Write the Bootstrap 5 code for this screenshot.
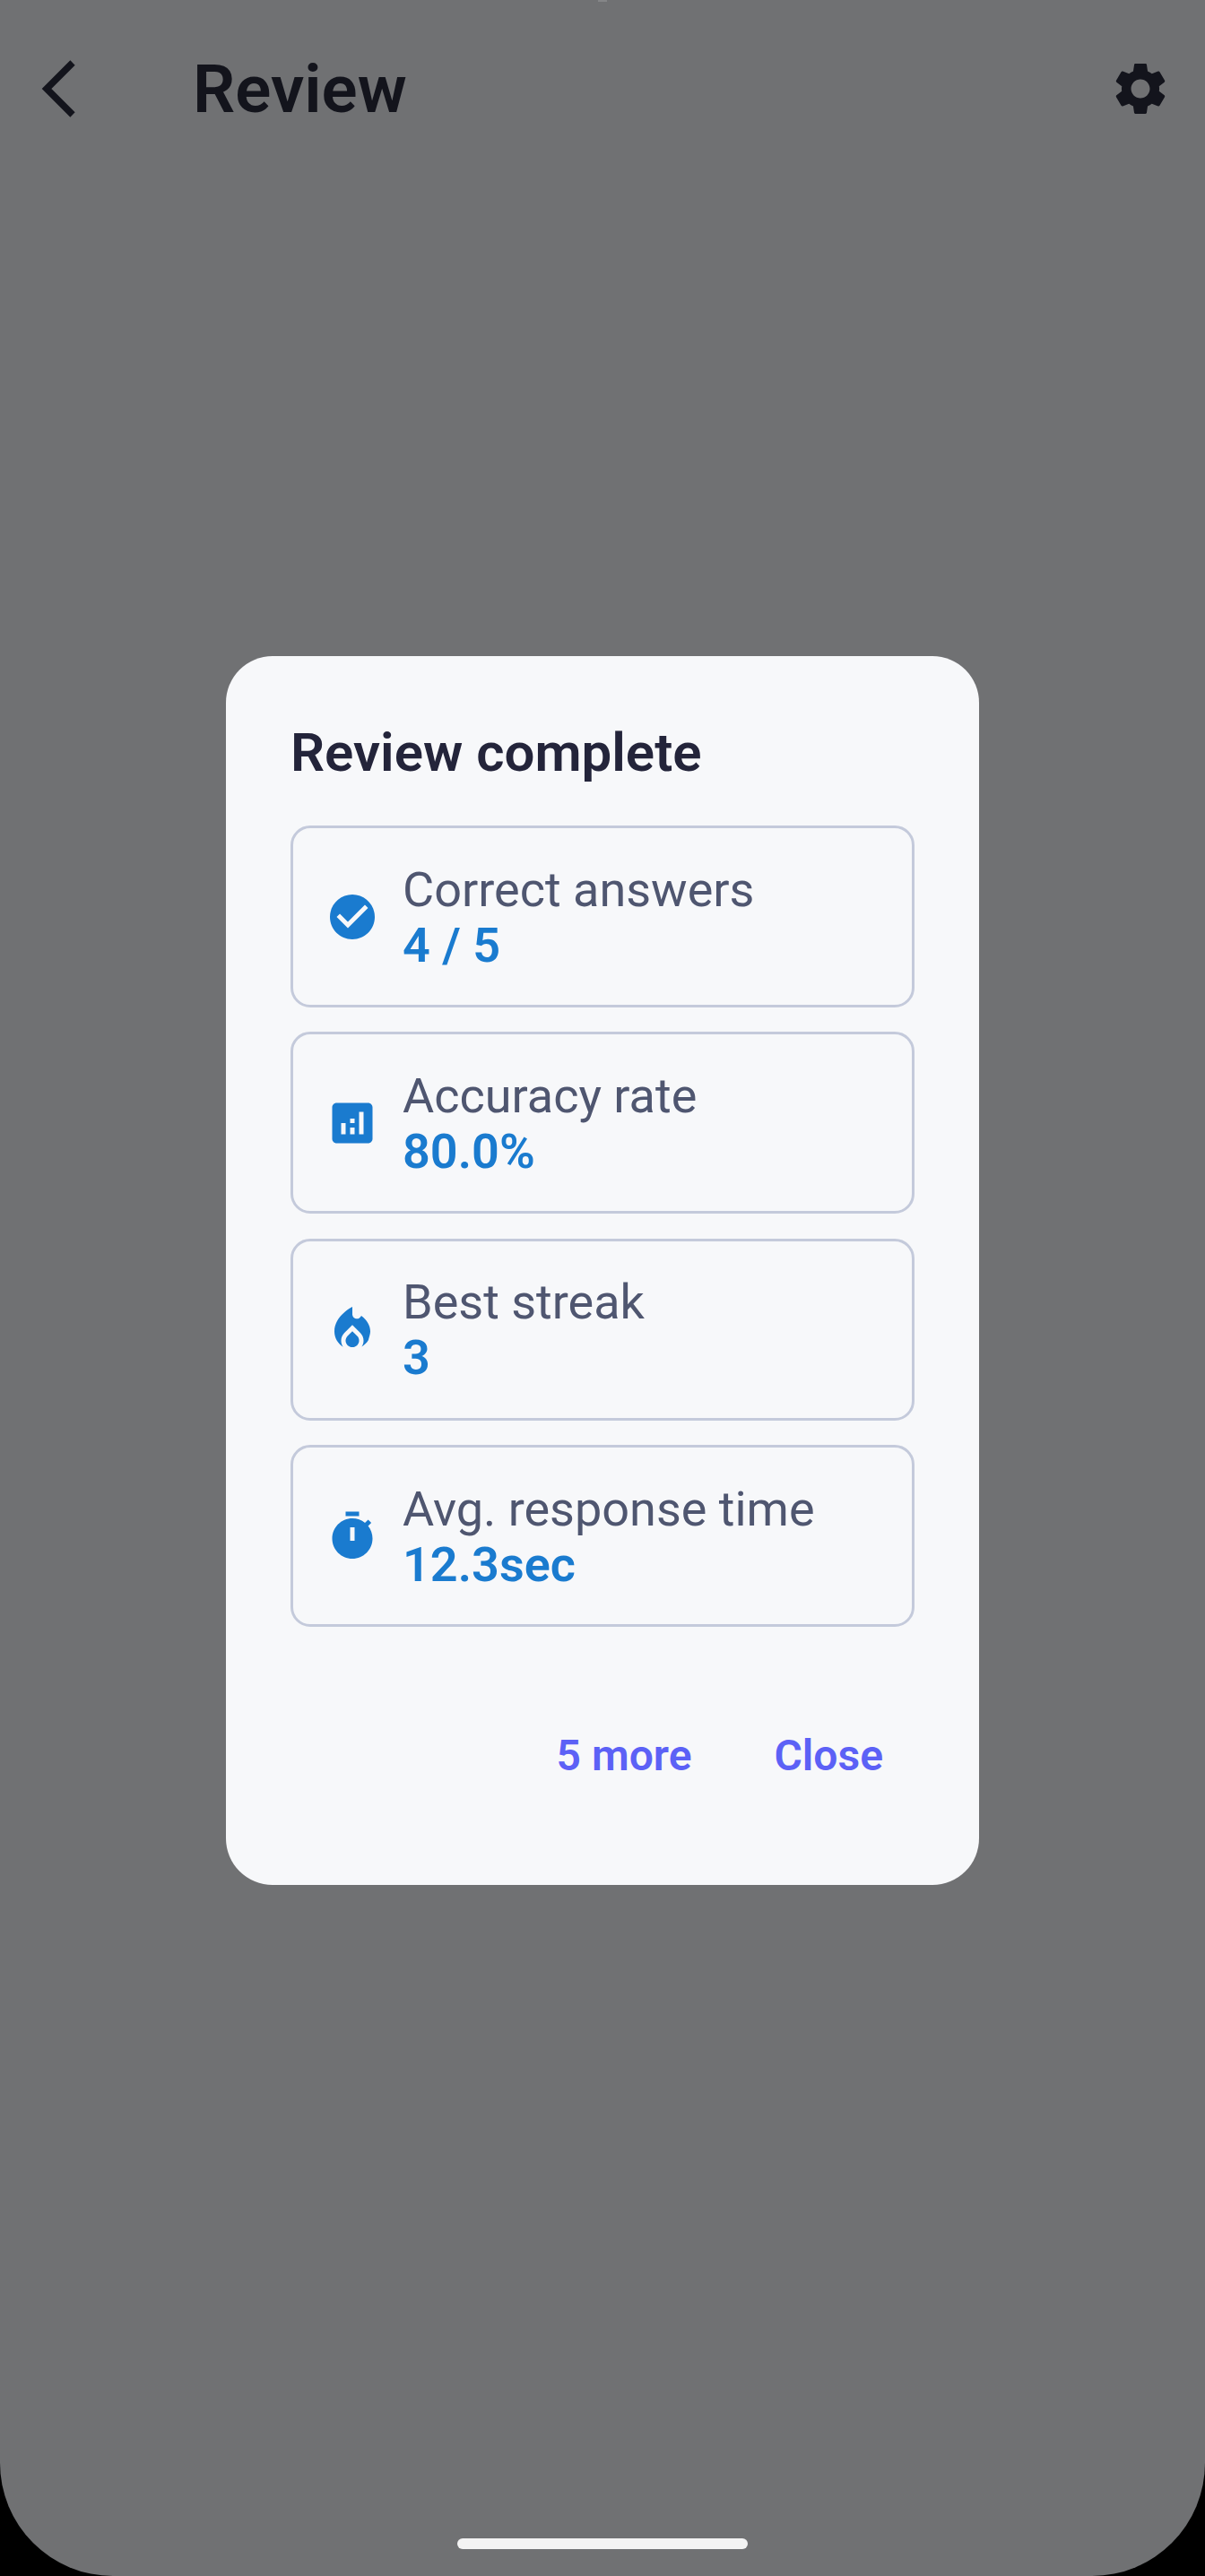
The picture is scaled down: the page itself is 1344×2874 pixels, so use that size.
<!DOCTYPE html>
<html>
<head>
    <title>Review</title>
    <link href="https://cdn.jsdelivr.net/npm/bootstrap@5.3.3/dist/css/bootstrap.min.css" rel="stylesheet">
    <style>
        body { background: #000; font-family: Roboto, "Liberation Sans", sans-serif; }
        .screen { width: 1344px; height: 2874px; background: #707173; border-radius: 0 0 126px 126px; }
        .camera-dot { top: 0; left: 667px; width: 10px; height: 2px; background: #858688; }
        .top-bar { height: 198px; padding: 0 37px 0 40px; }
        .top-title { font-size: 74.5px; font-weight: 600; color: #13141c; margin: 2px 0 0 125px; }
        .back-icon { width: 50px; height: 70px; }
        .gear-icon { width: 70px; height: 70px; fill: #13141c; }
        .dialog-box { width: 840px; height: 1371px; margin: 534px auto 0; padding: 75px 72px 0; background: #f7f8fa; border-radius: 52px; }
        .dialog-title { font-size: 60px; font-weight: 600; color: #23243a; line-height: 66px; margin: 0 0 48px; }
        .stat-box { height: 203px; margin-bottom: 27.4px; background: transparent; border: 3px solid #c4cadb; border-radius: 22px; }
        .stat-box .card-body { padding: 0 0 0 36px; gap: 26px; }
        .stat-icon { width: 60px; height: 60px; fill: #1a7bcf; fill-rule: evenodd; }
        .stat-text { padding-top: 2px; }
        .stat-label { font-size: 54px; line-height: 62px; color: #4f5670; }
        .stat-value { font-size: 54px; line-height: 62px; font-weight: 600; color: #1a7bcf; }
        .dialog-actions { margin-top: 115px; padding-right: 35px; gap: 92px; }
        .dialog-actions .btn { font-size: 48px; line-height: 58px; font-weight: 600; color: #5c61f6; padding: 0; border: 0; text-decoration: none; }
        .home-bar { width: 324px; height: 12px; background: #f3f3f3; border-radius: 6px; margin: auto auto 30px; }
    </style>
</head>
<body class="m-0">
    <div class="screen d-flex flex-column position-relative">
        <div class="camera-dot position-absolute"></div>

        <!-- Top bar -->
        <div class="top-bar d-flex align-items-center">
            <svg class="back-icon flex-shrink-0" viewBox="0 0 50 70"><path d="M41 6 L12 35 L41 64" fill="none" stroke="#13141c" stroke-width="7.5"/></svg>
            <h1 class="top-title flex-grow-1">Review</h1>
            <svg class="gear-icon" viewBox="0 0 24 24"><path d="M19.14 12.94c.04-.3.06-.61.06-.94 0-.32-.02-.64-.07-.94l2.03-1.58c.18-.14.23-.41.12-.61l-1.92-3.32c-.12-.22-.37-.29-.59-.22l-2.39.96c-.5-.38-1.03-.7-1.62-.94l-.36-2.54c-.04-.24-.24-.41-.48-.41h-3.84c-.24 0-.43.17-.47.41l-.36 2.54c-.59.24-1.13.57-1.62.94l-2.39-.96c-.22-.08-.47 0-.59.22L2.74 8.87c-.12.21-.08.47.12.61l2.03 1.58c-.05.3-.09.63-.09.94s.02.64.07.94l-2.03 1.58c-.18.14-.23.41-.12.61l1.92 3.32c.12.22.37.29.59.22l2.39-.96c.5.38 1.03.7 1.62.94l.36 2.54c.05.24.24.41.48.41h3.84c.24 0 .44-.17.47-.41l.36-2.54c.59-.24 1.13-.56 1.62-.94l2.39.96c.22.08.47 0 .59-.22l1.92-3.32c.12-.22.07-.47-.12-.61l-2.01-1.58zM12 15.6c-1.98 0-3.6-1.62-3.6-3.6s1.62-3.6 3.6-3.6 3.6 1.62 3.6 3.6-1.62 3.6-3.6 3.6z"/></svg>
        </div>

        <!-- Dialog -->
        <div class="dialog-box">
            <h2 class="dialog-title">Review complete</h2>

            <div class="card stat-box">
                <div class="card-body d-flex align-items-center">
                    <svg class="stat-icon" viewBox="0 0 24 24"><path d="M12 2C6.48 2 2 6.48 2 12s4.48 10 10 10 10-4.48 10-10S17.52 2 12 2zm-2 15l-5-5 1.41-1.41L10 14.17l7.59-7.59L19 8l-9 9z"/></svg>
                    <div class="stat-text">
                        <div class="stat-label">Correct answers</div>
                        <div class="stat-value">4 / 5</div>
                    </div>
                </div>
            </div>

            <div class="card stat-box">
                <div class="card-body d-flex align-items-center">
                    <svg class="stat-icon" viewBox="0 0 24 24"><path d="M19 3H5c-1.1 0-2 .9-2 2v14c0 1.1.9 2 2 2h14c1.1 0 2-.9 2-2V5c0-1.1-.9-2-2-2zM9 17H7v-5h2v5zm4 0h-2v-3h2v3zm0-5h-2v-2h2v2zm4 5h-2V7h2v10z"/></svg>
                    <div class="stat-text">
                        <div class="stat-label">Accuracy rate</div>
                        <div class="stat-value">80.0%</div>
                    </div>
                </div>
            </div>

            <div class="card stat-box">
                <div class="card-body d-flex align-items-center">
                    <svg class="stat-icon" viewBox="0 0 24 24"><path d="M12 12.9l-2.13 2.09C9.31 15.55 9 16.28 9 17.06 9 18.68 10.35 20 12 20s3-1.32 3-2.94c0-.78-.31-1.52-.87-2.07L12 12.9z"/><path d="M16 6l-.44.55C14.38 8.02 12 7.19 12 5.3V2c0 0-8 4-8 11 0 2.92 1.56 5.47 3.89 6.86C7.33 19.07 7 18.1 7 17.06c0-1.32.52-2.56 1.47-3.5L12 10.1l3.53 3.47c.95.93 1.47 2.17 1.47 3.5 0 1.02-.31 1.97-.85 2.77 1.2-.7 2.23-1.7 2.97-2.9C19.6 15.07 20 14.07 20 13c0-2.72-1.55-5.2-4-7z"/></svg>
                    <div class="stat-text">
                        <div class="stat-label">Best streak</div>
                        <div class="stat-value">3</div>
                    </div>
                </div>
            </div>

            <div class="card stat-box">
                <div class="card-body d-flex align-items-center">
                    <svg class="stat-icon" viewBox="0 0 24 24"><path d="M15 1H9v2h6V1zm-4 13h2V8h-2v6zm8.03-6.61l1.42-1.42c-.43-.51-.9-.99-1.41-1.41l-1.42 1.42C16.07 4.74 14.12 4 12 4c-4.97 0-9 4.03-9 9s4.02 9 9 9 9-4.03 9-9c0-2.12-.74-4.07-1.97-5.61z"/></svg>
                    <div class="stat-text">
                        <div class="stat-label">Avg. response time</div>
                        <div class="stat-value">12.3sec</div>
                    </div>
                </div>
            </div>

            <div class="dialog-actions d-flex justify-content-end">
                <button class="btn btn-link">5 more</button>
                <button class="btn btn-link">Close</button>
            </div>
        </div>

        <div class="home-bar"></div>
    </div>
    <script src="https://cdn.jsdelivr.net/npm/bootstrap@5.3.3/dist/js/bootstrap.bundle.min.js"></script>
</body>
</html>
